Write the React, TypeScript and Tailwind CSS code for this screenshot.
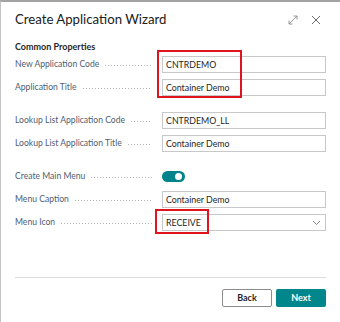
import type { FC, ReactNode } from "react";

const Leader = () => (
  <div className="flex-1 mx-[5px] h-[1px] bg-[radial-gradient(circle,#b4b4b4_0.7px,transparent_0.8px)] bg-[length:3px_1px] translate-y-[1px]" />
);

interface RowProps {
  label: string;
  children: ReactNode;
}

const Row: FC<RowProps> = ({ label, children }) => (
  <div className="flex h-[23px] items-center">
    <div className="flex w-[142px] items-center">
      <span className="text-[8.6px] text-[#4f5d70] whitespace-nowrap">{label}</span>
      <Leader />
    </div>
    <div className="ml-[5px] flex-1">{children}</div>
  </div>
);

const TextBox: FC<{ value: string }> = ({ value }) => (
  <div className="flex h-[17px] items-center border border-[#c8c8c8] px-[3px] text-[8.8px] text-[#1e1e1e]">
    {value}
  </div>
);

export default function App() {
  return (
    <div className="relative w-[340px] h-[322px] overflow-hidden bg-white border-t-2 border-t-[#a3a3a3] border-l border-l-[#c4c4c4] font-['Lato',sans-serif]">
      <div className="flex flex-col px-[14px] pr-[14px]">
        <div className="mt-[8px] flex h-[20px] items-center justify-between">
          <h1 className="text-[13.2px] text-[#202020]">Create Application Wizard</h1>
          <div className="flex items-center gap-[13px] pr-[5px]">
            <svg width="10" height="10" viewBox="0 0 10 10" fill="none" stroke="#8a8a8a" strokeWidth="0.9">
              <path d="M1 9 L9 1" />
              <path d="M5.5 1 H9 V4.5" />
              <path d="M1 5.5 V9 H4.5" />
            </svg>
            <svg width="10" height="10" viewBox="0 0 10 10" fill="none" stroke="#6a6a6a" strokeWidth="1">
              <path d="M1 1 L9 9 M9 1 L1 9" />
            </svg>
          </div>
        </div>

        <div className="mt-[11px] h-[12px] text-[9px] font-bold leading-[12px] text-[#262626]">
          Common Properties
        </div>

        <Row label="New Application Code">
          <TextBox value="CNTRDEMO" />
        </Row>
        <Row label="Application Title">
          <TextBox value="Container Demo" />
        </Row>

        <div className="mt-[10px]" />
        <Row label="Lookup List Application Code">
          <TextBox value="CNTRDEMO_LL" />
        </Row>
        <Row label="Lookup List Application Title">
          <TextBox value="Container Demo" />
        </Row>

        <div className="mt-[10px]" />
        <Row label="Create Main Menu">
          <div className="relative h-[11px] w-[23px] rounded-full bg-[#00838a]">
            <div className="absolute right-[3px] top-[2px] h-[7px] w-[7px] rounded-full bg-white" />
          </div>
        </Row>
        <Row label="Menu Caption">
          <TextBox value="Container Demo" />
        </Row>
        <Row label="Menu Icon">
          <div className="flex h-[17px] items-center justify-between border border-[#c8c8c8] px-[3px] text-[8.8px] text-[#1e1e1e]">
            <span>RECEIVE</span>
            <svg width="9" height="6" viewBox="0 0 9 6" fill="none" stroke="#777" strokeWidth="0.9" className="mr-[1px]">
              <path d="M1 1 L4.5 4.5 L8 1" />
            </svg>
          </div>
        </Row>

        <div className="mt-[43px] h-[1px] bg-[#dcdcdc]" />

        <div className="mt-[11px] flex justify-end gap-[4px]">
          <button className="h-[18px] w-[50px] rounded-[2px] border border-[#8c8c8c] bg-white text-[9px] font-bold text-[#262626]">
            Back
          </button>
          <button className="h-[18px] w-[50px] rounded-[2px] bg-[#00868b] text-[9px] font-bold text-white">
            Next
          </button>
        </div>
      </div>

      <div className="absolute left-[156px] top-[48px] h-[48px] w-[85px] border-2 border-[#e0141e]" />
      <div className="absolute left-[154px] top-[207px] h-[25px] w-[54px] border-2 border-[#e0141e]" />
    </div>
  );
}
